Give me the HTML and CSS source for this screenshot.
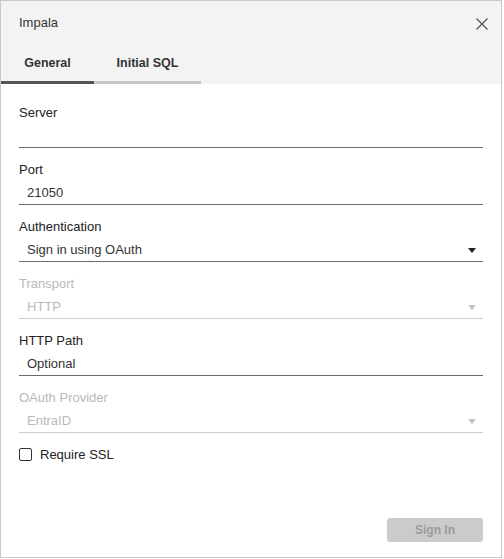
FILE: index.html
```html
<!DOCTYPE html>
<html lang="en">
<head>
    <meta charset="UTF-8">
    <meta name="viewport" content="width=device-width, initial-scale=1.0">
    <title>Impala</title>
    <link rel="stylesheet" href="styles.css">
</head>
<body>
    <div class="dialog">
        <!-- Header with title and tabs -->
        <div class="dialog-header">
            <div class="title-row">
                <span class="title">Impala</span>
                <button class="close" aria-label="Close">
                    <svg width="12" height="12" viewBox="0 0 12 12">
                        <path d="M0.5 0.5 L11.5 11.5 M11.5 0.5 L0.5 11.5" stroke="#555" stroke-width="1.2" fill="none"/>
                    </svg>
                </button>
            </div>
            <div class="tabs">
                <div class="tab active tab-general">General</div>
                <div class="tab tab-sql">Initial SQL</div>
            </div>
        </div>

        <!-- Connection form -->
        <div class="dialog-body">
            <div class="field">
                <label>Server</label>
                <div class="input"></div>
            </div>
            <div class="field">
                <label>Port</label>
                <div class="input">21050</div>
            </div>
            <div class="field">
                <label>Authentication</label>
                <div class="input select">Sign in using OAuth<span class="arrow"></span></div>
            </div>
            <div class="field disabled">
                <label>Transport</label>
                <div class="input select">HTTP<span class="arrow"></span></div>
            </div>
            <div class="field">
                <label>HTTP Path</label>
                <div class="input">Optional</div>
            </div>
            <div class="field disabled">
                <label>OAuth Provider</label>
                <div class="input select">EntraID<span class="arrow"></span></div>
            </div>

            <div class="checkbox-row">
                <span class="checkbox"></span>
                <span>Require SSL</span>
            </div>

            <div class="actions">
                <button class="sign-in" disabled>Sign In</button>
            </div>
        </div>
    </div>
</body>
</html>
```

FILE: styles.css
```css
/* Global Styles */
body {
    font-family: 'Liberation Sans', Arial, sans-serif;
    font-size: 13px;
    color: #333;
    background-color: #ffffff;
    margin: 0;
    padding: 0;
}

/* Dialog frame */
.dialog {
    box-sizing: border-box;
    width: 502px;
    height: 558px;
    border: 1px solid #c9c9c9;
    display: flex;
    flex-direction: column;
    background-color: #ffffff;
}

.dialog-header {
    background-color: #f3f3f3;
    height: 83px;
}

.title-row {
    height: 44px;
    display: flex;
    align-items: center;
    justify-content: space-between;
    padding: 0 13px 0 18px;
}

.title {
    color: #333;
    font-size: 13px;
    margin-top: -1px;
}

.close {
    background: none;
    border: none;
    padding: 0;
    width: 12px;
    height: 12px;
    margin-top: 1px;
    cursor: pointer;
}

/* Tabs */
.tabs {
    display: flex;
    height: 39px;
}

.tab {
    box-sizing: border-box;
    height: 39px;
    padding-top: 11px;
    text-align: center;
    font-weight: bold;
    font-size: 12.5px;
    color: #333;
    border-bottom: 3px solid #c8c8c8;
}

.tab.active {
    border-bottom-color: #555;
}

.tab-general {
    width: 93px;
}

.tab-sql {
    width: 107px;
}

/* Form body */
.dialog-body {
    flex: 1;
    display: flex;
    flex-direction: column;
    padding: 20px 18px 15px 18px;
}

.field {
    height: 44px;
    margin-bottom: 13px;
}

.field label {
    display: block;
    height: 18px;
    line-height: 18px;
    color: #222;
}

.input {
    position: relative;
    height: 20px;
    line-height: 20px;
    padding: 4px 8px 1px 8px;
    border-bottom: 1px solid #6a6a6a;
    color: #333;
}

.select .arrow {
    position: absolute;
    right: 7px;
    top: 12px;
    width: 0;
    height: 0;
    border-left: 4px solid transparent;
    border-right: 4px solid transparent;
    border-top: 5px solid #222;
}

/* Disabled fields */
.field.disabled label,
.field.disabled .input {
    color: #b9b9b9;
}

.field.disabled .input {
    border-bottom-color: #cdcdcd;
}

.field.disabled .arrow {
    border-top-color: #c2c2c2;
}

/* Checkbox */
.checkbox-row {
    display: flex;
    align-items: center;
    margin-top: 1px;
    color: #222;
}

.checkbox {
    box-sizing: border-box;
    width: 13px;
    height: 13px;
    border: 1px solid #333;
    border-radius: 2px;
    margin-right: 8px;
}

/* Footer button */
.actions {
    margin-top: auto;
    display: flex;
    justify-content: flex-end;
}

.sign-in {
    width: 96px;
    height: 24px;
    background-color: #cbcbcb;
    color: #9b9b9b;
    font-family: 'Liberation Sans', Arial, sans-serif;
    font-size: 12px;
    font-weight: bold;
    border: none;
    border-radius: 3px;
}
```
